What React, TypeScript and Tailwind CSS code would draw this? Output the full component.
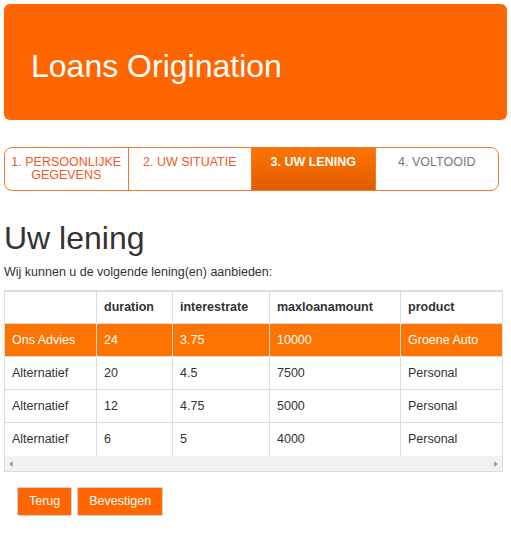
const steps = [
  { label: "1. PERSOONLIJKE GEGEVENS", state: "done" },
  { label: "2. UW SITUATIE", state: "done" },
  { label: "3. UW LENING", state: "active" },
  { label: "4. VOLTOOID", state: "todo" },
];

const rows = [
  ["Ons Advies", "24", "3.75", "10000", "Groene Auto"],
  ["Alternatief", "20", "4.5", "7500", "Personal"],
  ["Alternatief", "12", "4.75", "5000", "Personal"],
  ["Alternatief", "6", "5", "4000", "Personal"],
];

const cols = "grid grid-cols-[92px_76px_97px_131px_160px]";

export default function App() {
  return (
    <div className="p-[4px] font-['Liberation_Sans',Arial,sans-serif] text-[#333]">
      <header className="h-[116px] rounded-[6px] bg-[#ff6600] pl-[27px] pt-[46px]">
        <h1 className="text-[32px] leading-[32px] text-white">Loans Origination</h1>
      </header>

      <nav className="mt-[27px] flex h-[44px] w-[495px] overflow-hidden rounded-[8px] border border-[#f27a2e]">
        {steps.map((s, i) => (
          <div
            key={s.label}
            className={
              "flex-1 px-1 pt-[8px] text-center text-[12.5px] leading-[12.5px] " +
              (i < steps.length - 1 ? "border-r border-[#f27a2e] " : "") +
              (s.state === "active"
                ? "bg-gradient-to-b from-[#ff7400] to-[#e05c00] font-bold text-white"
                : s.state === "done"
                ? "text-[#f2582b]"
                : "text-[#777]")
            }
          >
            {s.label}
          </div>
        ))}
      </nav>

      <h2 className="mt-[31px] text-[32px] leading-[32px] text-[#333]">Uw lening</h2>
      <p className="mt-[10px] text-[12.5px] leading-[16px]">Wij kunnen u de volgende lening(en) aanbieden:</p>

      <div className="mt-[10px] w-[499px] overflow-hidden border border-t-2 border-[#ddd]">
        <div className={cols + " h-[32px] font-bold"}>
          {["", "duration", "interestrate", "maxloanamount", "product"].map((h, i) => (
            <div key={i} className="flex items-center border-b border-r border-[#ddd] px-[7px] text-[12.5px]">
              {h}
            </div>
          ))}
        </div>
        {rows.map((r, ri) => (
          <div
            key={ri}
            className={cols + " h-[33px] " + (ri === 0 ? "bg-[#ff7300] text-white" : "bg-white")}
          >
            {r.map((c, ci) => (
              <div
                key={ci}
                className={
                  "flex items-center border-r border-[#ddd] px-[7px] text-[12.5px] " +
                  (ri < rows.length - 1 ? "border-b" : "")
                }
              >
                {c}
              </div>
            ))}
          </div>
        ))}
        <div className="flex h-[15px] items-center justify-between bg-[#f1f1f1] px-[4px]">
          <span className="h-0 w-0 border-y-[3.5px] border-r-[4px] border-y-transparent border-r-[#a3a3a3]" />
          <span className="h-0 w-0 border-y-[3.5px] border-l-[4px] border-y-transparent border-l-[#a3a3a3]" />
        </div>
      </div>

      <div className="ml-[13px] mt-[15px] flex gap-[5px]">
        {["Terug", "Bevestigen"].map((b) => (
          <button
            key={b}
            className="flex h-[29px] items-center rounded-[2px] border border-[#d0d0d0] bg-[#ff6600] px-[11px] text-[12.5px] text-white"
          >
            {b}
          </button>
        ))}
      </div>
    </div>
  );
}
